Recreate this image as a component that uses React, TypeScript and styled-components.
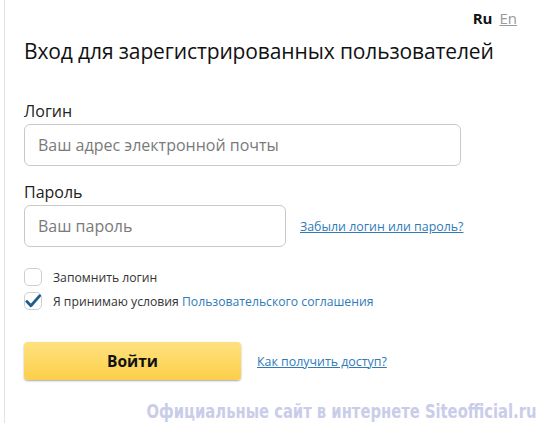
import React from 'react';
import styled, { createGlobalStyle } from 'styled-components';

const GlobalStyle = createGlobalStyle`
	html, body {
		margin: 0;
		padding: 0;
		background: #fff;
	}
	body {
		font-family: 'Open Sans', 'Noto Sans', sans-serif;
		color: #222;
	}
`;

const Panel = styled.div`
	box-sizing: border-box;
	width: 532px;
	height: 423px;
	margin-left: 4px;
	border-left: 1px solid #e3e3e3;
	padding: 0 0 0 19px;
	position: relative;
	overflow: hidden;
`;

const LangBar = styled.div`
	display: flex;
	justify-content: flex-end;
	gap: 7px;
	padding: 9px 19px 0 0;
	font-size: 15px;
	line-height: 18px;
`;

const Lang = styled.a<{ $active?: boolean }>`
	font-weight: ${(p) => (p.$active ? 700 : 400)};
	color: ${(p) => (p.$active ? '#111' : '#999')};
	text-decoration: ${(p) => (p.$active ? 'none' : 'underline')};
`;

const Title = styled.h1`
	margin: 9px 0 0;
	font-size: 21px;
	font-weight: 400;
	line-height: 30px;
	color: #111;
	letter-spacing: -0.12px;
`;

const Form = styled.form`
	display: flex;
	flex-direction: column;
	margin-top: 34px;
`;

const Label = styled.label`
	font-size: 16px;
	line-height: 22px;
	color: #222;
	margin-bottom: 2px;
`;

const Row = styled.div`
	display: flex;
	align-items: center;
	gap: 14px;
`;

const Input = styled.input<{ $width: number }>`
	box-sizing: border-box;
	width: ${(p) => p.$width}px;
	height: 42px;
	border: 1px solid #c9c9c9;
	border-radius: 6px;
	padding: 0 13px;
	font-family: inherit;
	font-size: 16px;
	color: #333;
	&::placeholder {
		color: #7a7a7a;
	}
`;

const Field = styled.div`
	display: flex;
	flex-direction: column;
	margin-bottom: 15px;
`;

const TextLink = styled.a`
	font-size: 12.4px;
	color: #2f7bb8;
	text-decoration: underline;
`;

const Checks = styled.div`
	display: flex;
	flex-direction: column;
	gap: 6px;
	margin-top: 6px;
`;

const CheckRow = styled.label`
	display: flex;
	align-items: center;
	gap: 11px;
	font-size: 12.2px;
	line-height: 17px;
	color: #333;
`;

const Box = styled.span`
	box-sizing: border-box;
	width: 18px;
	height: 18px;
	border: 1px solid #cfcfcf;
	border-radius: 5px;
	display: flex;
	align-items: center;
	justify-content: center;
`;

const Blue = styled.span`
	color: #2f7bb8;
`;

const Actions = styled.div`
	display: flex;
	align-items: center;
	gap: 16px;
	margin-top: 32px;
`;

const Submit = styled.button`
	width: 217px;
	height: 38px;
	border: none;
	border-radius: 4px;
	background: linear-gradient(#fee17f, #fccf4a);
	box-shadow: 0 1px 2px rgba(0, 0, 0, 0.35);
	font-family: inherit;
	font-size: 15.5px;
	font-weight: 700;
	color: #111;
`;

const Watermark = styled.div`
	position: absolute;
	right: 0;
	bottom: 1px;
	font-family: 'DejaVu Sans', sans-serif;
	font-stretch: condensed;
	font-weight: 700;
	font-size: 20px;
	line-height: 22px;
	color: #c9cde9;
	transform: scaleX(0.82);
	transform-origin: right center;
	white-space: nowrap;
`;

const Check = () => (
	<svg width="17" height="15" viewBox="0 0 17 15">
		<path d="M2 7.5 L6.3 12 L15.5 1.5" fill="none" stroke="#1f5d8d" strokeWidth="3" strokeLinecap="round" strokeLinejoin="round" />
	</svg>
);

export default function App() {
	return (
		<>
			<GlobalStyle />
			<Panel>
				<LangBar>
					<Lang $active>Ru</Lang>
					<Lang>En</Lang>
				</LangBar>
				<Title>Вход для зарегистрированных пользователей</Title>
				<Form>
					<Field>
						<Label>Логин</Label>
						<Input $width={437} placeholder="Ваш адрес электронной почты" />
					</Field>
					<Field>
						<Label>Пароль</Label>
						<Row>
							<Input $width={262} type="password" placeholder="Ваш пароль" />
							<TextLink>Забыли логин или пароль?</TextLink>
						</Row>
					</Field>
					<Checks>
						<CheckRow>
							<Box />
							Запомнить логин
						</CheckRow>
						<CheckRow>
							<Box>
								<Check />
							</Box>
							<span>
								Я принимаю условия <Blue>Пользовательского соглашения</Blue>
							</span>
						</CheckRow>
					</Checks>
					<Actions>
						<Submit type="button">Войти</Submit>
						<TextLink>Как получить доступ?</TextLink>
					</Actions>
				</Form>
				<Watermark>Официальные сайт в интернете Siteofficial.ru</Watermark>
			</Panel>
		</>
	);
}
